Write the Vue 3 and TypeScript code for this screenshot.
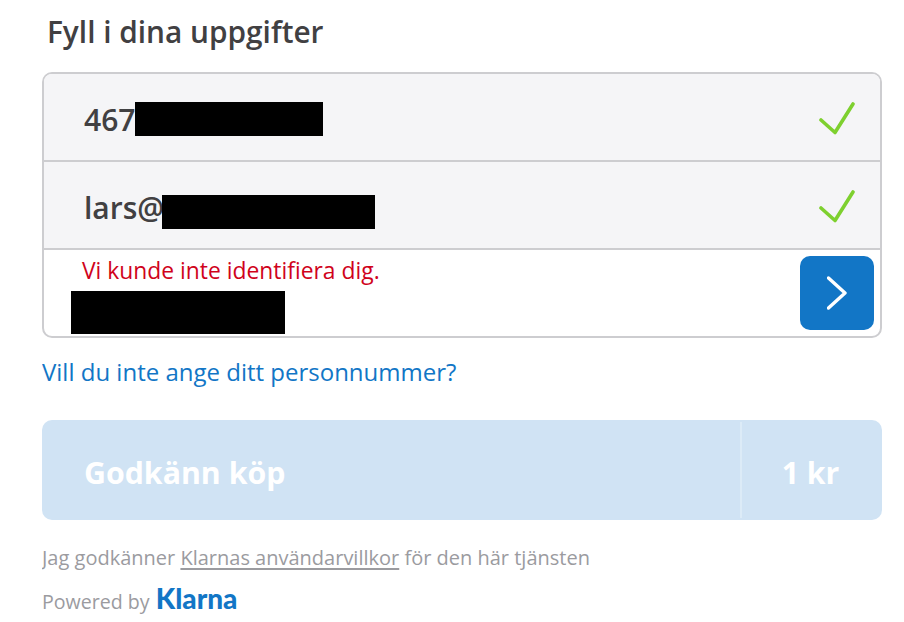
<script setup lang="ts">
const rows = [
  { id: 'phone', text: '467', bar: 'bar-phone' },
  { id: 'email', text: 'lars@', bar: 'bar-email' },
]
</script>

<template>
  <main class="page">
    <h1 class="title">Fyll i dina uppgifter</h1>
    <section class="card">
      <div v-for="row in rows" :key="row.id" class="row">
        <span class="value">{{ row.text }}</span>
        <span class="redacted" :class="row.bar"></span>
        <svg class="check" viewBox="0 0 36 36" width="36" height="36" fill="none">
          <path d="M2 19 L16 31.5 L34 3" stroke="#7ed02f" stroke-width="3.6" stroke-linecap="round" stroke-linejoin="round" />
        </svg>
      </div>
      <div class="row-input">
        <div class="input-text">
          <p class="error">Vi kunde inte identifiera dig.</p>
          <span class="redacted bar-id"></span>
        </div>
        <button class="next" type="button" aria-label="Nästa">
          <svg viewBox="0 0 20 34" width="20" height="34" fill="none">
            <path d="M1.5 2 L18 17 L1.5 32" stroke="#fff" stroke-width="3.4" stroke-linecap="round" stroke-linejoin="round" />
          </svg>
        </button>
      </div>
    </section>
    <a class="alt-link">Vill du inte ange ditt personnummer?</a>
    <div class="buy">
      <span class="buy-label">Godkänn köp</span>
      <span class="buy-price">1 kr</span>
    </div>
    <p class="terms">Jag godkänner <u>Klarnas användarvillkor</u> för den här tjänsten</p>
    <p class="powered">Powered by <span class="logo">Klarna</span></p>
  </main>
</template>

<style>
html, body { margin: 0; background: #fff; }
</style>

<style scoped>
.page {
  width: 840px;
  height: 622px;
  overflow: hidden;
  margin-left: 42px;
  font-family: "Open Sans", "Liberation Sans", sans-serif;
}
.title {
  margin: 0;
  padding: 13px 0 0 5px;
  height: 72px;
  box-sizing: border-box;
  font-size: 29.8px;
  line-height: 38px;
  font-weight: 600;
  color: #414042;
}
.card {
  height: 266px;
  box-sizing: border-box;
  border: 2px solid #cdcdd0;
  border-radius: 10px;
  overflow: hidden;
  display: flex;
  flex-direction: column;
}
.row {
  height: 88px;
  flex: none;
  box-sizing: border-box;
  display: flex;
  align-items: center;
  padding: 4px 25px 0 40px;
  background: #f5f5f7;
  border-bottom: 2px solid #cdcdd0;
}
.value {
  font-size: 30px;
  font-weight: 600;
  color: #414042;
}
.redacted {
  display: block;
  background: #000;
  flex: none;
}
.bar-phone { width: 188px; height: 34px; }
.bar-email { width: 213px; height: 34px; margin: 10px 0 0 -2px; }
.check { margin-left: auto; margin-top: -1px; }
.row-input {
  flex: 1;
  display: flex;
  justify-content: space-between;
  padding: 6px 6px 0 27px;
}
.input-text { display: flex; flex-direction: column; }
.error {
  margin: 0 0 0 11px;
  font-size: 22.85px;
  line-height: 30px;
  color: #d0021b;
}
.bar-id { width: 214px; height: 43px; margin-top: 5px; }
.next {
  width: 74px;
  height: 74px;
  padding: 0;
  border: 0;
  border-radius: 10px;
  background: #1276c6;
  display: flex;
  align-items: center;
  justify-content: center;
}
.alt-link {
  display: block;
  margin-top: 17px;
  font-size: 24px;
  line-height: 34px;
  color: #1276c6;
}
.buy {
  margin-top: 31px;
  height: 100px;
  border-radius: 10px;
  background: #d0e3f4;
  display: flex;
  align-items: center;
  color: #fff;
  font-size: 30.3px;
  font-weight: 700;
}
.buy-label { flex: 1; padding: 4px 0 0 42px; }
.buy-price {
  width: 142px;
  height: 96px;
  box-sizing: border-box;
  border-left: 2px solid #dcebf7;
  padding: 4px 3px 0 0;
  display: flex;
  align-items: center;
  justify-content: center;
}
.terms {
  margin: 25px 0 0;
  font-size: 20px;
  line-height: 26px;
  color: #9b9b9f;
}
.terms u { text-underline-offset: 3px; }
.powered {
  margin: 16px 0 0;
  font-size: 19.6px;
  line-height: 30px;
  color: #9b9b9f;
}
.logo {
  margin-left: 1px;
  font-family: Lato, "Open Sans", sans-serif;
  font-size: 28px;
  font-weight: 900;
  color: #1276c6;
  line-height: 20px;
}
</style>
